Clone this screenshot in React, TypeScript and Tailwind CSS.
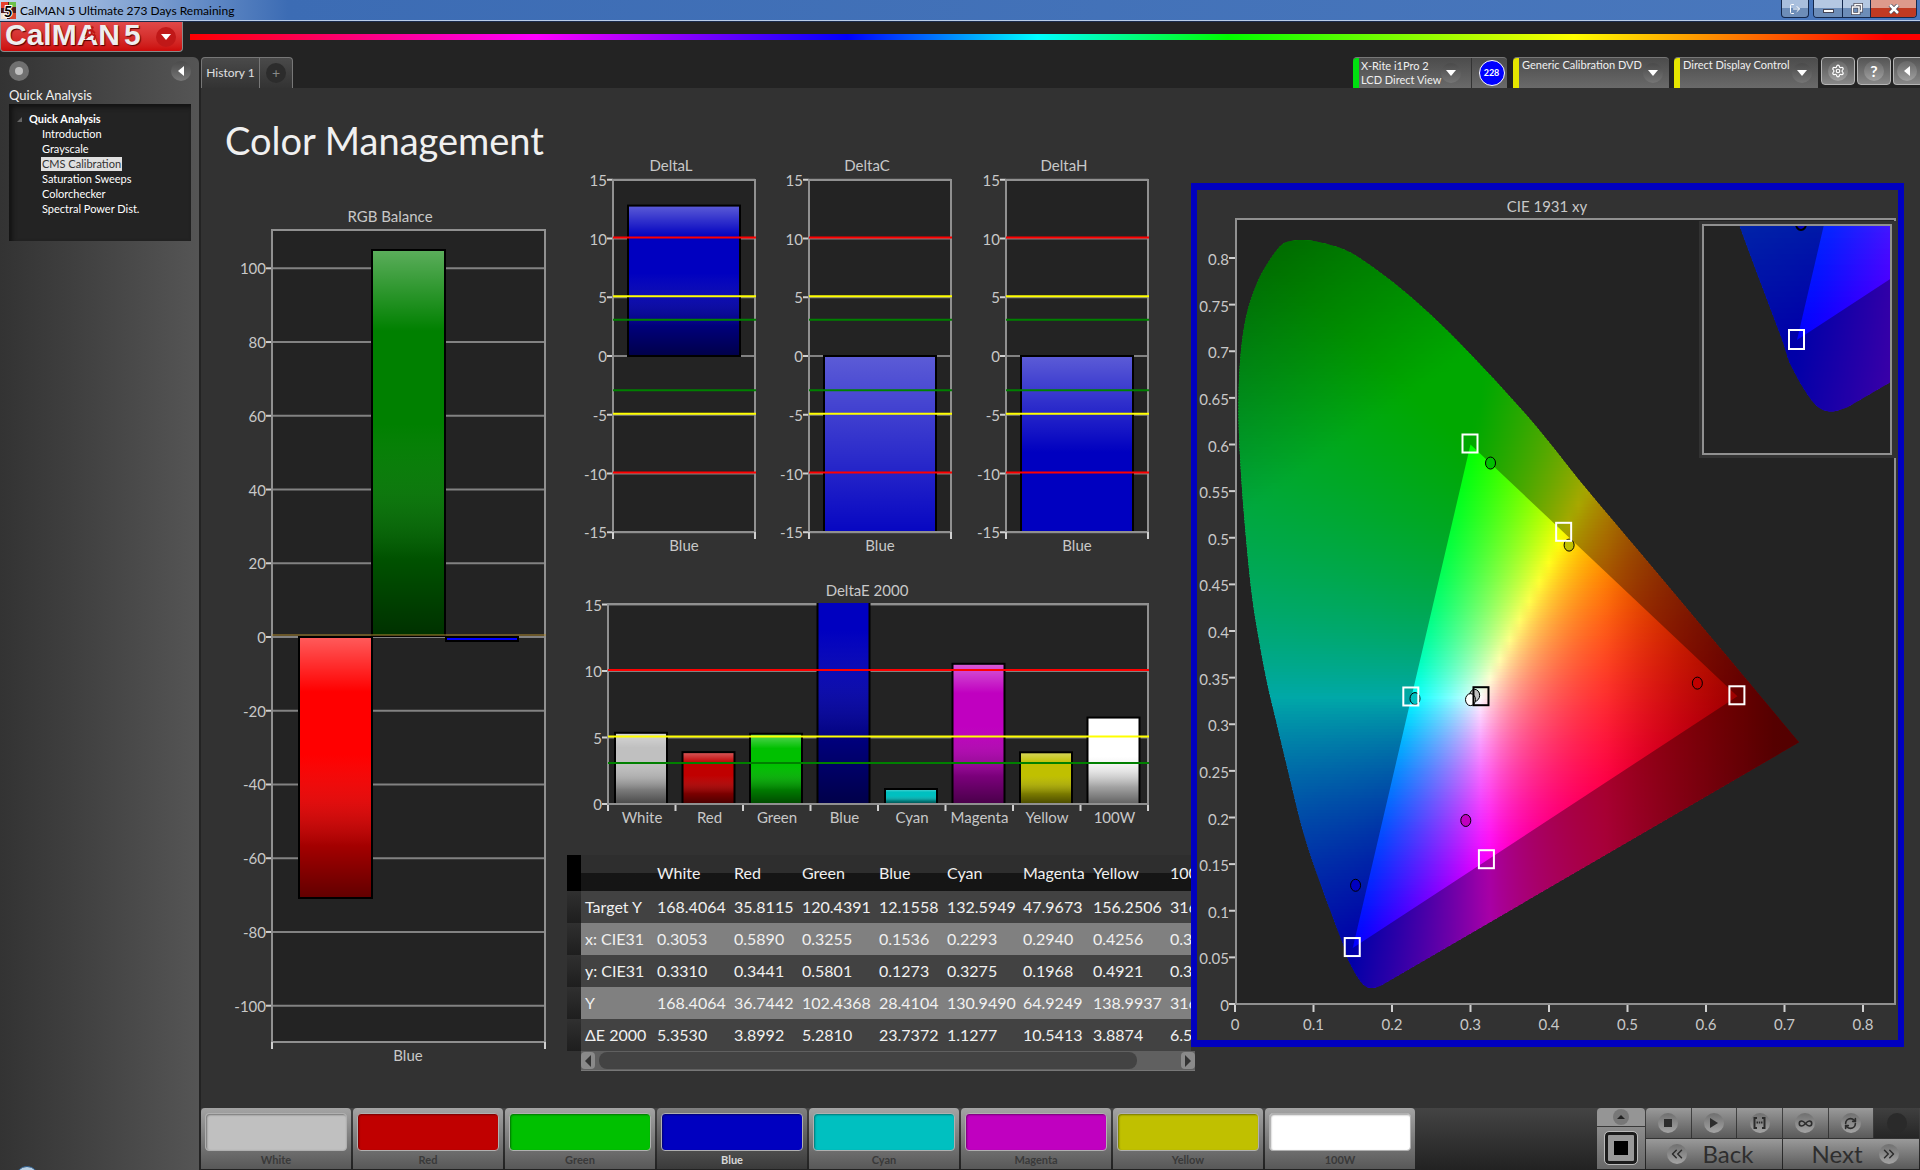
// src/App.tsx
import React from 'react';
import {
  ChevronsLeft,
  ChevronsRight,
  Infinity as InfinityIcon,
  LogOut,
  RefreshCw,
  Settings,
} from 'lucide-react';

type Patch = {
  name: string;
  color: string;
  values: string[];
  deltaE: number;
};

const patches: Patch[] = [
  { name: 'White', color: '#c0c0c0', values: ['168.4064', '0.3053', '0.3310', '168.4064', '5.3530'], deltaE: 5.353 },
  { name: 'Red', color: '#c00000', values: ['35.8115', '0.5890', '0.3441', '36.7442', '3.8992'], deltaE: 3.8992 },
  { name: 'Green', color: '#00c000', values: ['120.4391', '0.3255', '0.5801', '102.4368', '5.2810'], deltaE: 5.281 },
  { name: 'Blue', color: '#0000c0', values: ['12.1558', '0.1536', '0.1273', '28.4104', '23.7372'], deltaE: 23.7372 },
  { name: 'Cyan', color: '#00c0c0', values: ['132.5949', '0.2293', '0.3275', '130.9490', '1.1277'], deltaE: 1.1277 },
  { name: 'Magenta', color: '#c000c0', values: ['47.9673', '0.2940', '0.1968', '64.9249', '10.5413'], deltaE: 10.5413 },
  { name: 'Yellow', color: '#c0c000', values: ['156.2506', '0.4256', '0.4921', '138.9937', '3.8874'], deltaE: 3.8874 },
  { name: '100W', color: '#ffffff', values: ['316', '0.3', '0.3', '316', '6.5'], deltaE: 6.5 },
];

const rowLabels = ['Target Y', 'x: CIE31', 'y: CIE31', 'Y', 'ΔE 2000'];

const pages = [
  'Introduction',
  'Grayscale',
  'CMS Calibration',
  'Saturation Sweeps',
  'Colorchecker',
  'Spectral Power Dist.',
];

/* ---------- CHART HELPERS ---------- */

const LABEL = 'fill-[#c8c8c8] text-[15px]';

const ChartDefs = () => (
  <defs>
    <linearGradient id="gloss" x1="0" y1="0" x2="0" y2="1">
      <stop offset="0" stopColor="#fff" stopOpacity="0.36" />
      <stop offset="0.21" stopColor="#fff" stopOpacity="0" />
      <stop offset="0.45" stopColor="#888" stopOpacity="0" />
      <stop offset="0.62" stopColor="#555" stopOpacity="0.16" />
      <stop offset="0.8" stopColor="#000" stopOpacity="0.36" />
      <stop offset="1" stopColor="#000" stopOpacity="0.62" />
    </linearGradient>
  </defs>
);

type BarProps = { x: number; y: number; w: number; h: number; color: string };

const Bar = ({ x, y, w, h, color }: BarProps) => (
  <g>
    <rect x={x} y={y} width={w} height={h} fill={color} />
    <rect x={x} y={y} width={w} height={h} fill="url(#gloss)" stroke="#000" strokeWidth="2" />
  </g>
);

type YAxisProps = {
  ticks: number[];
  x: number;
  right: number;
  toY: (v: number) => number;
};

const YAxis = ({ ticks, x, right, toY }: YAxisProps) => (
  <g>
    {ticks.map((t) => (
      <g key={t}>
        <line x1={x} x2={right} y1={toY(t)} y2={toY(t)} stroke="#828282" strokeWidth="2" />
        <line x1={x - 6} x2={x} y1={toY(t)} y2={toY(t)} stroke="#d0d0d0" strokeWidth="2" />
        <text x={x - 6} y={toY(t)} textAnchor="end" dominantBaseline="central" className={LABEL}>
          {t}
        </text>
      </g>
    ))}
  </g>
);

const limits = [
  { v: 10, color: '#ff0000' },
  { v: 5, color: '#ffff00' },
  { v: 3, color: '#008000' },
];

/* ---------- RGB BALANCE ---------- */

const RgbBalance = () => {
  const toY = (v: number) => 437 - v * 3.687;
  return (
    <svg viewBox="0 0 366 880" className="block w-full h-auto" role="img" aria-label="RGB Balance">
      <ChartDefs />
      <text x="189" y="16" textAnchor="middle" dominantBaseline="central" className={LABEL}>RGB Balance</text>
      <rect x="71" y="30" width="273" height="812" fill="#232323" />
      <YAxis ticks={[100, 80, 60, 40, 20, 0, -20, -40, -60, -80, -100]} x={71} right={344} toY={toY} />
      <rect x="71" y="30" width="273" height="812" fill="none" stroke="#909090" strokeWidth="2" />
      <Bar x={98} y={437} w={73} h={261} color="#ff0000" />
      <Bar x={171} y={50} w={73} h={386} color="#008000" />
      <rect x="245" y="437" width="72" height="4" fill="#0000ff" stroke="#000" strokeWidth="2" />
      <line x1="71" x2="345" y1="435" y2="435" stroke="#b08a30" />
      <path d="M71 842v7M344 842v7" stroke="#d0d0d0" strokeWidth="2" />
      <text x="207" y="855" textAnchor="middle" dominantBaseline="central" className={LABEL}>Blue</text>
    </svg>
  );
};

/* ---------- DELTA L / C / H ---------- */

type DeltaChartProps = { title: string; value: number; offset: number };

const DeltaChart = ({ title, value, offset }: DeltaChartProps) => {
  const toY = (v: number) => 206 - v * 11.75;
  const top = value > 0 ? toY(value) : toY(0);
  return (
    <g transform={`translate(${offset} 0)`}>
      <text x="104" y="15" textAnchor="middle" dominantBaseline="central" className={LABEL}>{title}</text>
      <rect x="46" y="30" width="142" height="352" fill="#232323" />
      <YAxis ticks={[15, 10, 5, 0, -5, -10, -15]} x={46} right={188} toY={toY} />
      <g clipPath="url(#deltaClip)">
        <Bar x={61} y={top} w={112} h={Math.abs(value) * 11.75} color="#0000c0" />
      </g>
      <rect x="46" y="30" width="142" height="352" fill="none" stroke="#909090" strokeWidth="2" />
      {limits.map(({ v, color }) => (
        <path key={v} d={`M46 ${toY(v) - 1}H189M46 ${toY(-v) - 1}H189`} stroke={color} strokeWidth="2" />
      ))}
      <path d="M46 382v7M188 382v7" stroke="#d0d0d0" strokeWidth="2" />
      <text x="117" y="395" textAnchor="middle" dominantBaseline="central" className={LABEL}>Blue</text>
    </g>
  );
};

const DeltaCharts = () => (
  <svg viewBox="0 0 628 420" className="block w-full h-auto" role="img" aria-label="Delta L, C and H">
    <clipPath id="deltaClip">
      <rect x="46" y="30" width="142" height="352" />
    </clipPath>
    <DeltaChart title="DeltaL" value={12.8} offset={0} />
    <DeltaChart title="DeltaC" value={-77} offset={196} />
    <DeltaChart title="DeltaH" value={-39} offset={393} />
  </svg>
);

/* ---------- DELTA E ---------- */

const DeltaE = () => {
  const toY = (v: number) => 234 - v * 13.3;
  const step = 540 / patches.length;
  return (
    <svg viewBox="0 0 628 285" className="block w-full h-auto" role="img" aria-label="DeltaE 2000">
      <clipPath id="deltaEClip">
        <rect x="41" y="33" width="541" height="201" />
      </clipPath>
      <text x="300" y="20" textAnchor="middle" dominantBaseline="central" className={LABEL}>DeltaE 2000</text>
      <rect x="41" y="34" width="540" height="200" fill="#232323" />
      <YAxis ticks={[15, 10, 5, 0]} x={41} right={581} toY={toY} />
      <rect x="41" y="34" width="540" height="200" fill="none" stroke="#909090" strokeWidth="2" />
      <g clipPath="url(#deltaEClip)">
        {patches.map((p, i) => (
          <Bar key={p.name} x={48 + i * step} y={toY(p.deltaE)} w={52} h={p.deltaE * 13.3} color={p.color} />
        ))}
      </g>
      <path d="M41 234H581" stroke="#909090" strokeWidth="2" />
      {limits.map(({ v, color }) => (
        <path key={v} d={`M41 ${toY(v) - 1}H582`} stroke={color} strokeWidth="2" />
      ))}
      {patches.map((p, i) => (
        <g key={p.name}>
          <path d={`M${41 + i * step} 235v6`} stroke="#d0d0d0" strokeWidth="2" />
          <text x={75 + i * step} y="247" textAnchor="middle" dominantBaseline="central" className={LABEL}>
            {p.name}
          </text>
        </g>
      ))}
      <path d="M581 235v6" stroke="#d0d0d0" strokeWidth="2" />
    </svg>
  );
};

/* ---------- CIE 1931 ---------- */

const cx = (x: number) => 38 + x * 785;
const cy = (y: number) => 814 - y * 932.5;

// spectral locus in chromaticity units, from the violet end round to the red end
const locus: [number, number][] = [
  [0.1855, 0.0196], [0.1729, 0.0172], [0.1614, 0.0228], [0.1464, 0.0436], [0.1373, 0.0651],
  [0.1103, 0.1258], [0.0874, 0.1831], [0.0694, 0.2438], [0.0531, 0.301], [0.0411, 0.3439],
  [0.0306, 0.3903], [0.0213, 0.4404], [0.0124, 0.5155], [0.0062, 0.5906], [0.0045, 0.6442],
  [0.0069, 0.6942], [0.0141, 0.7371], [0.0279, 0.7729], [0.0442, 0.7979], [0.0592, 0.8139],
  [0.0712, 0.8182], [0.0874, 0.8193], [0.1103, 0.8164], [0.1404, 0.8086], [0.1704, 0.7932],
  [0.2245, 0.7578], [0.2907, 0.7049], [0.3748, 0.6281], [0.4469, 0.553], [0.5311, 0.469],
  [0.6201, 0.3796], [0.7186, 0.2806],
];

// Catmull-Rom spline through the locus points
const locusPath = () => {
  const p = locus.map(([x, y]) => [cx(x), cy(y)]);
  let d = `M${p[0][0]} ${p[0][1]}`;
  for (let i = 0; i < p.length - 1; i++) {
    const a = p[Math.max(i - 1, 0)];
    const b = p[i];
    const c = p[i + 1];
    const e = p[Math.min(i + 2, p.length - 1)];
    d += `C${b[0] + (c[0] - a[0]) / 6} ${b[1] + (c[1] - a[1]) / 6} ${c[0] - (e[0] - b[0]) / 6} ${c[1] - (e[1] - b[1]) / 6} ${c[0]} ${c[1]}`;
  }
  return d + 'Z';
};

const clamp = (v: number) => Math.min(1, Math.max(0, v));

const xyToColor = (x: number, y: number) => {
  const z = 1 - x - y;
  const rgb = [
    3.2406 * x - 1.5372 * y - 0.4986 * z,
    -0.9689 * x + 1.8758 * y + 0.0415 * z,
    0.0557 * x - 0.204 * y + 1.057 * z,
  ].map((v) => Math.max(0, v));
  const max = Math.max(...rgb);
  const fade = (1 - 0.5 * clamp((x - 0.47) / 0.22)) * (1 - 0.34 * clamp((y - 0.6 * x - 0.52) / 0.25));
  const [r, g, b] = rgb.map((v) => Math.round(255 * fade * (v / max)));
  return `rgb(${r},${g},${b})`;
};

const STRIP = 3;
const strips = Array.from({ length: 258 }, (_, i) => {
  const top = 44 + i * STRIP;
  const y = (814 - top - STRIP / 2) / 932.5;
  const end = Math.min(0.73, 1.01 - y);
  const stops = Array.from({ length: Math.ceil(end / 0.0125) + 1 }, (_, k) => k * 0.0125);
  return { top, y, end, stops };
});

const Gamut = () => (
  <g id="gamut">
    <g clipPath="url(#locusClip)">
      {strips.map((s, i) => (
        <g key={s.top}>
          <linearGradient id={`strip${i}`} gradientUnits="userSpaceOnUse" x1={cx(0)} x2={cx(s.end)} y1="0" y2="0">
            {s.stops.map((x) => (
              <stop key={x} offset={Math.min(1, x / s.end)} stopColor={xyToColor(x, s.y)} />
            ))}
          </linearGradient>
          <rect x={cx(0)} y={s.top} width={cx(s.end) - cx(0)} height={STRIP + 1} fill={`url(#strip${i})`} />
        </g>
      ))}
      {/* everything outside of the Rec.709 triangle is dimmed */}
      <path
        fillRule="evenodd"
        fillOpacity="0.34"
        d={`M0 0H700V850H0ZM${cx(0.64)} ${cy(0.33)}L${cx(0.3)} ${cy(0.6)}L${cx(0.15)} ${cy(0.06)}Z`}
      />
    </g>
  </g>
);

const targets = [
  { x: 0.64, y: 0.33 },
  { x: 0.3, y: 0.6 },
  { x: 0.15, y: 0.06 },
  { x: 0.2246, y: 0.3287 },
  { x: 0.3209, y: 0.1542 },
  { x: 0.4193, y: 0.5053 },
];

const measured = [
  { x: 0.3053, y: 0.331, fill: '#c0c0c0' },
  { x: 0.589, y: 0.3441, fill: '#c00000' },
  { x: 0.3255, y: 0.5801, fill: '#00c000' },
  { x: 0.1536, y: 0.1273, fill: '#0000c0' },
  { x: 0.2293, y: 0.3275, fill: '#00c0c0' },
  { x: 0.294, y: 0.1968, fill: '#c000c0' },
  { x: 0.4256, y: 0.4921, fill: '#c0c000' },
  { x: 0.3, y: 0.3264, fill: '#ffffff' },
];

const yTicks = [0, 0.05, 0.1, 0.15, 0.2, 0.25, 0.3, 0.35, 0.4, 0.45, 0.5, 0.55, 0.6, 0.65, 0.7, 0.75, 0.8];
const xTicks = [0, 0.1, 0.2, 0.3, 0.4, 0.5, 0.6, 0.7, 0.8];

const CieChart = () => (
  <svg viewBox="0 0 701 850" className="block w-full h-auto" role="img" aria-label="CIE 1931 xy">
    <defs>
      <clipPath id="locusClip">
        <path d={locusPath()} />
      </clipPath>
      <clipPath id="insetClip">
        <rect x="506" y="35" width="188" height="229" />
      </clipPath>
    </defs>
    <text x="350" y="16" textAnchor="middle" dominantBaseline="central" className={LABEL}>CIE 1931 xy</text>
    <rect x="39" y="29" width="659" height="785" fill="#232323" stroke="#909090" strokeWidth="2" />
    {yTicks.map((t) => (
      <g key={t}>
        <path d={`M32 ${cy(t)}h6`} stroke="#d0d0d0" strokeWidth="2" />
        <text x="32" y={cy(t) + 1} textAnchor="end" dominantBaseline="central" className={LABEL}>{t}</text>
      </g>
    ))}
    {xTicks.map((t) => (
      <g key={t}>
        <path d={`M${cx(t)} 815v7`} stroke="#d0d0d0" strokeWidth="2" />
        <text x={cx(t)} y="834" textAnchor="middle" dominantBaseline="central" className={LABEL}>{t}</text>
      </g>
    ))}
    <Gamut />
    {measured.map((m) => (
      <ellipse key={m.x} cx={cx(m.x)} cy={cy(m.y)} rx="5" ry="6" fill={m.fill} stroke="#000" />
    ))}
    {targets.map((t) => (
      <rect key={t.x} x={cx(t.x) - 8} y={cy(t.y) - 10} width="15" height="18" fill="none" stroke="#fff" strokeWidth="2" />
    ))}
    <rect x={cx(0.3127) - 7} y={cy(0.329) - 10} width="15" height="18" fill="none" stroke="#000" strokeWidth="2" />

    {/* INSET AROUND THE BLUE TARGET */}
    <rect x="502" y="31" width="199" height="237" fill="#323232" />
    <rect x="506" y="35" width="188" height="229" fill="#232323" />
    <g clipPath="url(#insetClip)">
      <use href="#gamut" transform={`translate(600 150) scale(1.79) translate(${-cx(0.15)} ${-cy(0.06)})`} />
      <ellipse cx="604" cy="34" rx="5" ry="6" fill="#0000c0" stroke="#000" strokeWidth="2" />
    </g>
    <rect x="592" y="140" width="15" height="19" fill="none" stroke="#fff" strokeWidth="2" />
    <rect x="506" y="35" width="188" height="229" fill="none" stroke="#909090" strokeWidth="2" />
  </svg>
);

/* ---------- TABLE ---------- */

const ResultsTable = () => (
  <div>
    <div className="overflow-hidden mr-1">
      <table className="table-fixed w-[676px] text-base text-[#f0f0f0] border-collapse">
        <colgroup>
          <col className="w-[14px]" />
          <col className="w-[72px]" />
          <col className="w-[77px]" />
          <col className="w-[68px]" />
          <col className="w-[77px]" />
          <col className="w-[68px]" />
          <col className="w-[76px]" />
          <col className="w-[70px]" />
          <col className="w-[77px]" />
          <col className="w-[77px]" />
        </colgroup>
        <thead>
          <tr className="h-9">
            <td className="bg-black" />
            <td className="bg-linear-to-b from-[#2e2e2e] from-50% to-[#151515] to-50%" />
            {patches.map((p) => (
              <th key={p.name} scope="col" className="p-0 pl-1 font-normal text-left bg-linear-to-b from-[#2e2e2e] from-50% to-[#151515] to-50%">
                {p.name}
              </th>
            ))}
          </tr>
        </thead>
        <tbody>
          {rowLabels.map((label, r) => (
            <tr key={label} className="h-8 bg-[#424242] even:bg-[#808080]">
              <td className="bg-linear-to-b from-[#303030] to-[#1e1e1e]" />
              <th scope="row" className="p-0 pl-1 font-normal text-left whitespace-nowrap">{label}</th>
              {patches.map((p) => (
                <td key={p.name} className="p-0 pl-1 whitespace-nowrap">{p.values[r]}</td>
              ))}
            </tr>
          ))}
        </tbody>
      </table>
    </div>
    {/* SCROLLBAR */}
    <div className="ml-[14px] h-5 flex items-center bg-[#606060] border-b border-[#777]">
      <button aria-label="Scroll left" className="w-[14px] h-[17px] rounded bg-[#8a8a8a] flex items-center justify-center">
        <svg viewBox="0 0 6 12" className="w-[6px] h-3"><path d="M6 0v12L0 6z" fill="#333" /></svg>
      </button>
      <div className="flex-1 px-1">
        <div className="w-[93%] h-[17px] rounded-lg bg-[#434343]" />
      </div>
      <button aria-label="Scroll right" className="w-[14px] h-[17px] rounded bg-[#8a8a8a] flex items-center justify-center">
        <svg viewBox="0 0 6 12" className="w-[6px] h-3"><path d="M0 0v12l6-6z" fill="#333" /></svg>
      </button>
    </div>
  </div>
);

/* ---------- CHROME ---------- */

const Caret = () => (
  <span className="w-5 h-5 rounded-full bg-linear-to-b from-[#4a4a4a] to-[#757575] flex items-center justify-center shrink-0">
    <svg viewBox="0 0 10 6" className="w-[10px] h-[6px]"><path d="M0 0h10L5 6z" fill="#fff" /></svg>
  </span>
);

const TitleBar = () => (
  <div className="h-[22px] flex items-start border-b border-[#1b2c4c] bg-linear-to-r from-[#c3d5ec] via-[#3c6cb4] via-15% to-[#4a78bd] shadow-[inset_0_-1px_0_#b9cde8]">
    <svg viewBox="0 0 15 17" className="ml-px mt-[2px] w-[15px] h-[17px] shrink-0 overflow-visible">
      <rect width="15" height="17" fill="#501a1a" />
      <path d="M0 0h7v6H0z" fill="#e8402c" />
      <path d="M8 0h7v5H8z" fill="#6cc04a" />
      <path d="M9 11h6v6H9z" fill="#d8432f" />
      <path d="M0 11h6v6H0z" fill="#f0e0d0" />
      <text x="7" y="9" textAnchor="middle" dominantBaseline="central" className="text-[15px] font-bold" fill="#000" stroke="#fff" strokeWidth="2" paintOrder="stroke">5</text>
    </svg>
    <h2 className="ml-1 text-[12px] leading-[21px] text-black whitespace-nowrap">CalMAN 5 Ultimate 273 Days Remaining</h2>
    <div className="ml-auto flex gap-1 pr-[3px]">
      <button aria-label="Detach" className="w-[28px] h-[18px] rounded-b border border-t-0 border-[#14284c] bg-linear-to-b from-[#a9bfdd] from-50% to-[#6d8db8] to-50% flex items-center justify-center">
        <LogOut size={12} color="#fff" />
      </button>
      <div className="flex rounded-b overflow-hidden border border-t-0 border-[#14284c]">
        <button aria-label="Minimize" className="w-[28px] h-[17px] bg-linear-to-b from-[#b5c8e2] from-50% to-[#6d8db8] to-50% flex items-center justify-center">
          <span className="w-[11px] h-[4px] mt-1 bg-white border border-[#445]" />
        </button>
        <button aria-label="Restore" className="w-[28px] h-[17px] border-l border-[#14284c] bg-linear-to-b from-[#b5c8e2] from-50% to-[#6d8db8] to-50% flex items-center justify-center">
          <svg viewBox="0 0 12 12" className="w-3 h-3" fill="none" stroke="#445" strokeWidth="3">
            <path d="M4 3V1.500H10.500V8H9M1.500 4H8V10.500H1.500Z" />
            <path d="M4 3V1.500H10.500V8H9M1.500 4H8V10.500H1.500Z" stroke="#fff" strokeWidth="1.500" />
          </svg>
        </button>
        <button aria-label="Close" className="w-[46px] h-[17px] border-l border-[#14284c] bg-linear-to-b from-[#dd9a8c] from-50% to-[#c03a22] to-50% flex items-center justify-center">
          <svg viewBox="0 0 12 10" className="w-3 h-[10px]" fill="none" stroke="#445" strokeWidth="4">
            <path d="M2 1l8 8M10 1l-8 8" />
            <path d="M2 1l8 8M10 1l-8 8" stroke="#fff" strokeWidth="2.500" />
          </svg>
        </button>
      </div>
    </div>
  </div>
);

const Logo = () => (
  <button aria-label="CalMAN 5 menu" className="relative w-[183px] h-[30px] pl-1 flex items-start rounded-b border border-t-0 border-[#8a8a8a] bg-linear-to-b from-[#e04848] to-[#cc0808]">
    <span className="font-['Liberation_Sans'] font-bold text-[30px] leading-[26px] text-[#eee] whitespace-nowrap text-shadow-[1px_1px_1px_#500]">
      CalMAN<span className="ml-1">5</span>
    </span>
    {/* runner inside the A */}
    <svg viewBox="0 0 14 16" className="absolute left-[83px] top-[3px] w-[14px] h-4" fill="none" stroke="#c01515" strokeWidth="2">
      <circle cx="8.500" cy="2.500" r="1.200" fill="#c01515" stroke="none" />
      <path d="M3 6l4-1 1 4-4 2-3 3M8 9l3 2-1 4M7 5l4 3" />
    </svg>
    <span className="ml-auto mr-[6px] mt-[5px] w-5 h-5 rounded-full bg-[#c01818] flex items-center justify-center">
      <svg viewBox="0 0 10 6" className="w-[10px] h-[6px]"><path d="M0 0h10L5 6z" fill="#fff" /></svg>
    </span>
  </button>
);

const TAB = 'h-[31px] flex rounded-t border-t border-[#777] bg-linear-to-b from-[#4c4c4c] to-[#6a6a6a] text-[11px] text-[#f0f0f0] text-left';
const SQUARE = 'w-[34px] h-7 rounded border border-[#b5b5b5] bg-linear-to-b from-[#555] to-[#888] flex items-center justify-center';
const DISC = 'w-5 h-5 rounded-full bg-linear-to-b from-[#686868] to-[#a0a0a0] flex items-center justify-center text-white';

const TopTabs = () => (
  <div className="h-[31px] flex">
    <div className="flex rounded-t border border-b-0 border-[#777] bg-linear-to-b from-[#4a4a4a] to-[#333]">
      <button className="w-[57px] text-[12px] text-[#e0e0e0] whitespace-nowrap">History 1</button>
      <button aria-label="Add history" className="w-[33px] border-l border-[#777] flex items-center justify-center">
        <span className="w-5 h-5 rounded-full bg-[#2c2c2c] text-[#888] text-[14px] leading-5">+</span>
      </button>
    </div>
    <div className="ml-auto flex">
      <div className={`${TAB} w-[154px]`}>
        <span className="w-[6px] bg-[#00e010] rounded-tl" />
        <button className="w-[112px] pl-[2px] pr-[10px] flex items-center justify-between leading-[14px] text-left">
          <span className="whitespace-nowrap">X-Rite i1Pro 2<br />LCD Direct View</span>
          <Caret />
        </button>
        <button aria-label="Meter reading" className="flex-1 pl-1 border-l border-[#333] flex items-center justify-center">
          <span className="w-[26px] h-[26px] rounded-full border border-white bg-[#0000ff] text-[9px] font-bold text-white flex items-center justify-center">228</span>
        </button>
      </div>
      <button className={`${TAB} w-[156px] ml-[6px]`}>
        <span className="w-[6px] h-full bg-[#e6e600] rounded-tl" />
        <span className="pl-[3px] leading-[14px] whitespace-nowrap">Generic Calibration DVD</span>
        <span className="ml-auto mr-[6px] self-center"><Caret /></span>
      </button>
      <button className={`${TAB} w-[144px] ml-[5px]`}>
        <span className="w-[6px] h-full bg-[#e6e600] rounded-tl" />
        <span className="pl-[3px] leading-[14px] whitespace-nowrap">Direct Display Control</span>
        <span className="ml-auto mr-[6px] self-center"><Caret /></span>
      </button>
      <div className="ml-[3px] flex gap-[2px]">
        <button aria-label="Settings" className={SQUARE}><span className={DISC}><Settings size={14} /></span></button>
        <button aria-label="Help" className={SQUARE}><span className={`${DISC} text-[16px] font-bold`}>?</span></button>
        <button aria-label="Collapse" className="w-[27px] h-7 rounded-l border border-r-0 border-[#b5b5b5] bg-linear-to-b from-[#555] to-[#888] flex items-center justify-center">
          <span className={DISC}>
            <svg viewBox="0 0 6 10" className="w-[6px] h-[10px]"><path d="M6 0v10L0 5z" fill="#fff" /></svg>
          </span>
        </button>
      </div>
    </div>
  </div>
);

const Sidebar = () => (
  <aside className="w-[199px] shrink-0 rounded-tr-md bg-linear-to-r from-[#333] to-[#555] pl-[9px] pr-2 overflow-hidden relative">
    <div className="pt-1 flex items-center justify-between">
      <button aria-label="Record" className="w-5 h-5 rounded-full bg-[#707070] flex items-center justify-center">
        <span className="w-2 h-2 rounded-full bg-[#c0c0c0]" />
      </button>
      <button aria-label="Hide sidebar" className="w-5 h-5 rounded-full bg-linear-to-b from-[#4a4a4a] to-[#777] flex items-center justify-center">
        <svg viewBox="0 0 6 10" className="w-[6px] h-[10px]"><path d="M6 0v10L0 5z" fill="#fff" /></svg>
      </button>
    </div>
    <h2 className="mt-[6px] text-[13px] leading-4 text-[#f0f0f0]">Quick Analysis</h2>
    <nav className="mt-px h-[137px] pt-[7px] bg-[#232323] shadow-[inset_3px_3px_5px_#111] text-[11px] text-white">
      <div className="flex items-center h-4 pl-2">
        <svg viewBox="0 0 5 5" className="w-[5px] h-[5px] mr-[7px]"><path d="M5 0v5H0z" fill="#666" /></svg>
        <a href="#quick" className="font-bold">Quick Analysis</a>
      </div>
      <ul className="pl-8">
        {pages.map((page) => (
          <li key={page} className="h-[15px] leading-[14px]">
            <a
              href={`#${page}`}
              className={page === 'CMS Calibration' ? 'inline-block px-px bg-[#e0e0e0] text-[#333]' : 'inline-block px-px'}
            >
              {page}
            </a>
          </li>
        ))}
      </ul>
    </nav>
    {/* start orb peeking in from the taskbar */}
    <span className="absolute left-[15px] -bottom-[20px] w-6 h-6 rounded-full bg-[#b9cfe2] border border-[#2b5c8c]" />
  </aside>
);

/* ---------- BOTTOM BAR ---------- */

const KEY = 'bg-linear-to-b from-[#9a9a9a] to-[#5a5a5a] flex items-center justify-center';
const KNOB = 'w-5 h-5 rounded-full bg-linear-to-b from-[#707070] to-[#a4a4a4] flex items-center justify-center text-[#2c2c2c]';

const BottomBar = () => (
  <footer className="h-[62px] pb-px flex bg-linear-to-b from-[#444] to-[#222]">
    <div className="flex gap-[2px]">
      {patches.map((p) => (
        <button
          key={p.name}
          className={
            p.name === 'Blue'
              ? 'w-[150px] rounded-t bg-linear-to-b from-[#808080] to-[#3a3a3a] px-1 pt-1 text-[#d8d8d8] font-bold'
              : 'w-[150px] rounded-t bg-linear-to-b from-[#a4a4a4] to-[#585858] px-1 pt-1 text-[#3a3a3a] font-bold'
          }
        >
          <span
            className="block h-[38px] rounded border border-[#b0b0b0] shadow-[inset_1px_1px_2px_#0006]"
            style={{ backgroundColor: p.color }}
          />
          <span className="block text-[11px] leading-[18px]">{p.name}</span>
        </button>
      ))}
    </div>
    <div className="ml-auto flex gap-px pr-px">
      <div className="w-12 flex flex-col gap-px">
        <button aria-label="Expand" className="h-[18px] rounded-t bg-[#959595] flex items-center justify-center">
          <span className="w-4 h-4 rounded-full bg-[#777] flex items-center justify-center">
            <svg viewBox="0 0 8 4" className="w-2 h-1"><path d="M0 4h8L4 0z" fill="#222" /></svg>
          </span>
        </button>
        <button aria-label="Read patch" className="flex-1 bg-linear-to-b from-[#8c8c8c] to-[#686868] flex items-center justify-center">
          <span className="w-8 h-8 rounded border-3 border-[#1c1c1c] outline outline-[#bbb] bg-[#999] flex items-center justify-center">
            <span className="w-[14px] h-[14px] bg-black" />
          </span>
        </button>
      </div>
      <div className="w-[273px] flex flex-col gap-px">
        <div className="h-[30px] shrink-0 grid grid-cols-6 gap-px">
          <button aria-label="Stop" className={`${KEY} rounded-tl`}>
            <span className={KNOB}><span className="w-2 h-2 bg-[#2c2c2c]" /></span>
          </button>
          <button aria-label="Read" className={KEY}>
            <span className={KNOB}><svg viewBox="0 0 9 10" className="w-[9px] h-[10px]"><path d="M1 0l8 5-8 5z" fill="#2c2c2c" /></svg></span>
          </button>
          <button aria-label="Read series" className={KEY}>
            <span className={KNOB}>
              <svg viewBox="0 0 13 12" className="w-[13px] h-3" fill="none" stroke="#2c2c2c" strokeWidth="2">
                <path d="M4 1H1.500V11H4M9 1H11.500V11H9" />
                <path d="M3.500 5.500h6" strokeDasharray="1.500 0.750" />
              </svg>
            </span>
          </button>
          <button aria-label="Read continuous" className={KEY}>
            <span className={KNOB}><InfinityIcon size={15} strokeWidth={2.5} /></span>
          </button>
          <button aria-label="Refresh" className={KEY}>
            <span className={KNOB}><RefreshCw size={13} strokeWidth={3} /></span>
          </button>
          <button aria-label="Idle" className="bg-linear-to-b from-[#404040] to-[#262626] flex items-center justify-center">
            <span className="w-5 h-5 rounded-full bg-[#2a2a2a]" />
          </button>
        </div>
        <div className="flex-1 grid grid-cols-2 gap-px text-[24px] leading-6 text-[#2e2e2e]">
          <button className={`${KEY} gap-4 pr-2`}>
            <span className={KNOB}><ChevronsLeft size={18} /></span>
            Back
          </button>
          <button className={`${KEY} gap-4 pl-2`}>
            Next
            <span className={KNOB}><ChevronsRight size={18} /></span>
          </button>
        </div>
      </div>
    </div>
  </footer>
);

const App: React.FC = () => {
  return (
    <div className="min-h-screen flex flex-col bg-[#232323] font-[Lato,'Open_Sans',sans-serif] overflow-x-hidden">
      <TitleBar />
      <header className="h-[35px] flex items-start">
        <Logo />
        <div className="flex-1 ml-[7px] mt-3 h-[6px] bg-[linear-gradient(90deg,#f00,#f0f_20%,#00f_38%,#0ff_49%,#0f0_60%,#ff0_80%,#f00_98%)]" />
      </header>
      <div className="flex-1 flex">
        <Sidebar />
        <div className="flex-1 min-w-0 ml-[2px] flex flex-col">
          <TopTabs />
          <main className="flex-1 grid grid-cols-[366fr_628fr_709fr] items-start pr-4 bg-[#323232]">
            <section className="min-w-0">
              <h1 className="h-28 pt-6 pl-6 text-[38px] leading-[56px] text-[#f0f0f0] whitespace-nowrap">Color Management</h1>
              <RgbBalance />
            </section>
            <section className="min-w-0 pt-[62px]">
              <DeltaCharts />
              <DeltaE />
              <ResultsTable />
            </section>
            <section className="min-w-0 relative -ml-1 mt-[95px] border-x-6 border-y-7 border-[#0000c0] bg-[#323232]">
              <CieChart />
            </section>
          </main>
          <BottomBar />
        </div>
      </div>
    </div>
  );
};

export default App;
